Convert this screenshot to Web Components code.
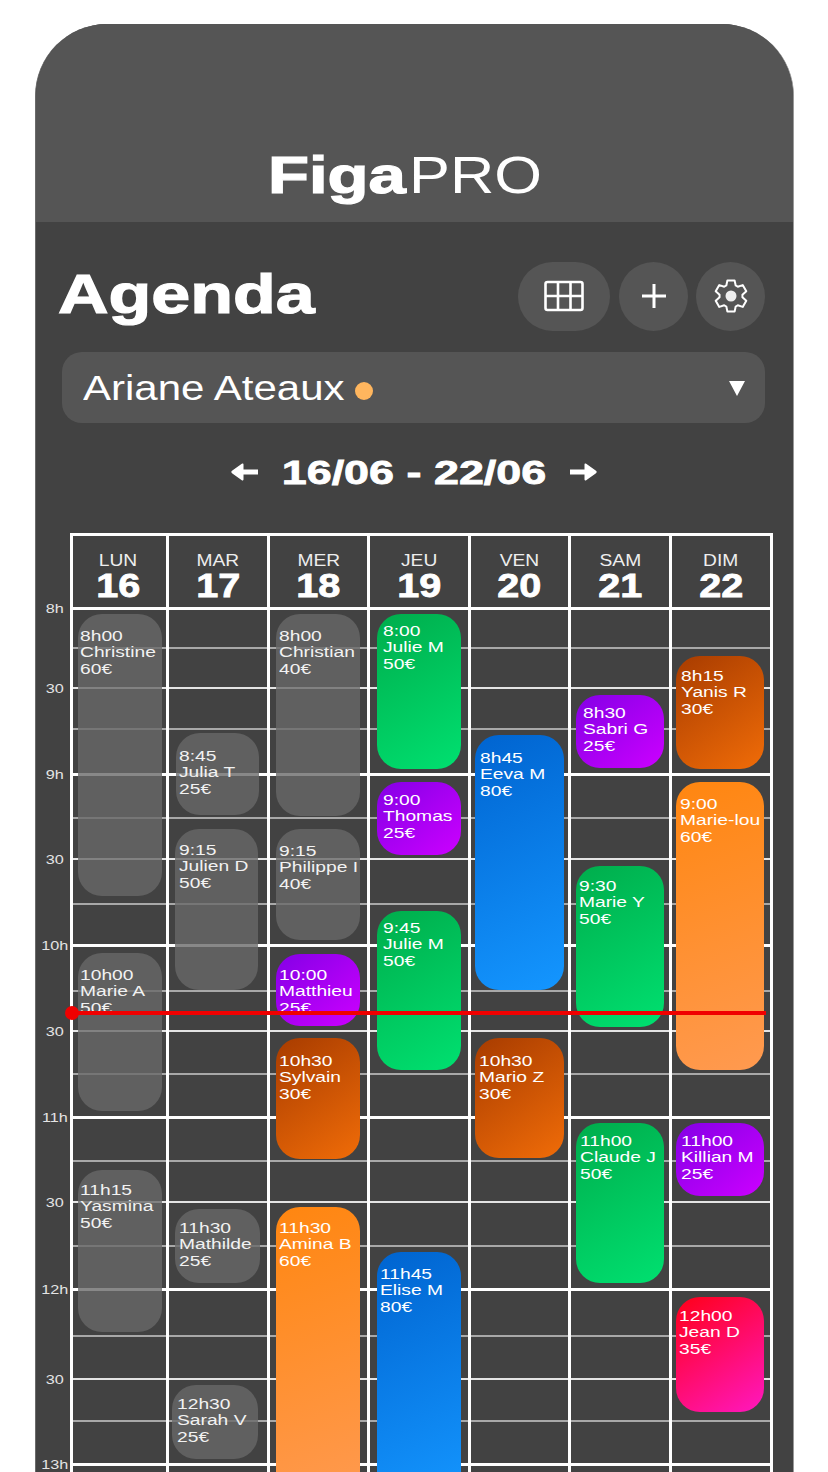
<!DOCTYPE html>
<html lang="fr">
<head>
<meta charset="utf-8">
<title>FigaPRO Agenda</title>
<style>
  html, body { margin: 0; background: #fff; height: 1472px; overflow: hidden; }
  body { font-family: "Liberation Sans", Arial, sans-serif; color: #fff; }
</style>
</head>
<body>
<figa-app>
  <figa-header></figa-header>
  <agenda-bar>
    <icon-button wide><svg width="40" height="32" viewBox="0 0 40 32" fill="none" stroke="#fff" stroke-width="2.6"><rect x="1.5" y="2" width="37" height="28" rx="2"/><path d="M14 2v28M26.500 2v28M1.500 16h37"/></svg></icon-button>
    <icon-button><svg width="26" height="26" viewBox="0 0 26 26" fill="none" stroke="#fff" stroke-width="3"><path d="M13 1v24M1 13h24"/></svg></icon-button>
    <icon-button><gear-icon></gear-icon></icon-button>
  </agenda-bar>
  <person-select>Ariane Ateaux</person-select>
  <week-nav>16/06 - 22/06</week-nav>
  <week-calendar></week-calendar>
</figa-app>

<script>
/* APP SHELL */
class FigaApp extends HTMLElement {
  constructor() {
    super();
    this.attachShadow({mode: 'open'}).innerHTML = `
      <style>
        :host { display: block; box-sizing: border-box; width: 759px; height: 1448px; margin: 24px 0 0 35px;
          background: #424242; border-radius: 72px 72px 0 0; overflow: hidden;
          border-right: 1px solid #999; border-left: 1px solid #6a6a6a; }
      </style>
      <slot></slot>`;
  }
}
customElements.define('figa-app', FigaApp);

class FigaHeader extends HTMLElement {
  constructor() {
    super();
    this.attachShadow({mode: 'open'}).innerHTML = `
      <style>
        :host { display: flex; justify-content: center; align-items: flex-end; box-sizing: border-box; height: 198px; padding: 0 0 17px 0; background: #555; }
        .logo { display: flex; font-size: 52px; line-height: 60px; margin-right: 22px; }
        b { display: block; width: 141px; font-weight: 700; -webkit-text-stroke: 1.2px #fff; transform: scaleX(1.29); transform-origin: 0 50%; }
        span { display: block; width: 130px; font-weight: 400; transform: scaleX(1.18); transform-origin: 0 50%; }
      </style>
      <div class="logo"><b>Figa</b><span>PRO</span></div>`;
  }
}
customElements.define('figa-header', FigaHeader);

/* TITLE + ACTIONS */
class AgendaBar extends HTMLElement {
  constructor() {
    super();
    this.attachShadow({mode: 'open'}).innerHTML = `
      <style>
        :host { display: flex; align-items: center; height: 70px; padding: 39px 28px 0 24px; }
        h1 { flex: 1; margin: -4px 0 0 -2px; font-size: 56px; line-height: 70px; font-weight: 700; -webkit-text-stroke: 1.2px #fff; transform: scaleX(1.25); transform-origin: 0 50%; }
        .actions { display: flex; gap: 8px; }
      </style>
      <h1>Agenda</h1>
      <div class="actions"><slot></slot></div>`;
  }
}
customElements.define('agenda-bar', AgendaBar);

class IconButton extends HTMLElement {
  constructor() {
    super();
    this.attachShadow({mode: 'open'}).innerHTML = `
      <style>
        :host { display: flex; align-items: center; justify-content: center; width: 69px; height: 69px; border-radius: 35px; background: #555; }
        :host([wide]) { width: 92px; margin-right: 1px; }
      </style>
      <slot></slot>`;
  }
}
customElements.define('icon-button', IconButton);

// six teeth, outline only, filled hub
class GearIcon extends HTMLElement {
  constructor() {
    super();
    const pts = [];
    for (let k = 0; k < 6; k++) {
      const a = -90 + 60 * k;
      [[a - 24, 11.5], [a - 13, 16], [a + 13, 16], [a + 24, 11.5]].forEach(([deg, r]) => {
        const rad = deg * Math.PI / 180;
        pts.push((18 + r * Math.cos(rad)).toFixed(2) + ',' + (18 + r * Math.sin(rad)).toFixed(2));
      });
    }
    this.attachShadow({mode: 'open'}).innerHTML = `
      <style>:host { display: block; width: 36px; height: 36px; } svg { display: block; }</style>
      <svg width="36" height="36" viewBox="0 0 36 36">
        <polygon points="${pts.join(' ')}" fill="none" stroke="#fff" stroke-width="2" stroke-linejoin="round"/>
        <circle cx="18" cy="18" r="5.500" fill="#eee"/>
      </svg>`;
  }
}
customElements.define('gear-icon', GearIcon);

/* PERSON DROPDOWN */
class PersonSelect extends HTMLElement {
  constructor() {
    super();
    this.attachShadow({mode: 'open'}).innerHTML = `
      <style>
        :host { display: flex; align-items: center; box-sizing: border-box; height: 71px; margin: 21px 28px 0 26px; padding: 0 20px 0 21px; background: #555; border-radius: 20px; }
        .name { width: 262px; font-size: 35px; transform: scaleX(1.2); transform-origin: 0 50%; white-space: nowrap; }
        .dot { width: 18px; height: 18px; margin: 6px 0 0 10px; border-radius: 50%; background: #ffb65e; }
        .arrow { margin-left: auto; margin-top: 2px; width: 0; height: 0; border-left: 8px solid transparent; border-right: 8px solid transparent; border-top: 15px solid #fff; }
      </style>
      <span class="name"><slot></slot></span><i class="dot"></i><i class="arrow"></i>`;
  }
}
customElements.define('person-select', PersonSelect);

/* WEEK NAV */
class WeekNav extends HTMLElement {
  constructor() {
    super();
    this.attachShadow({mode: 'open'}).innerHTML = `
      <style>
        :host { display: flex; align-items: center; justify-content: center; gap: 23px; height: 40px; margin-top: 29px; padding-right: 2px; }
        .date { width: 266px; text-align: center; font-size: 34px; font-weight: 700; white-space: nowrap; -webkit-text-stroke: .8px #fff; transform: scaleX(1.32); }
      </style>
      <svg width="27" height="20" viewBox="0 0 27 20" fill="#fff"><path d="M27 7.500v5H12.500v5a1 1 0 0 1-1.700.7L1 11.200a1.600 1.600 0 0 1 0-2.400L10.800 1.800a1 1 0 0 1 1.700.7v5z"/></svg>
      <span class="date"><slot></slot></span>
      <svg width="27" height="20" viewBox="0 0 27 20" fill="#fff"><path d="M0 7.500v5h14.500v5a1 1 0 0 0 1.700.7L26 11.200a1.600 1.600 0 0 0 0-2.400L16.200 1.800a1 1 0 0 0-1.700.7v5z"/></svg>`;
  }
}
customElements.define('week-nav', WeekNav);

/* ONE APPOINTMENT */
class CalEvent extends HTMLElement {
  constructor() {
    super();
    this.attachShadow({mode: 'open'}).innerHTML = `
      <style>
        :host { position: absolute; box-sizing: border-box; overflow: hidden; border-radius: 24px; font-size: 15.500px; line-height: 16.300px; color: #fff; }
        :host([tone=gray]) { background: rgba(104,104,104,.79); color: #f2f2f2; }
        :host([tone=green]) { background: linear-gradient(150deg, #00ad4c, #00e070); }
        :host([tone=purple]) { background: linear-gradient(140deg, #8400e6, #cc00ff); }
        :host([tone=rust]) { background: linear-gradient(145deg, #a83c00, #f06c08); }
        :host([tone=orange]) { background: linear-gradient(160deg, #ff8610, #ff9a50); }
        :host([tone=blue]) { background: linear-gradient(155deg, #0064d0, #1496ff); }
        :host([tone=red]) { background: linear-gradient(145deg, #ff0018, #ff18c0); }
        div { white-space: nowrap; transform: scaleX(1.24); transform-origin: 0 0; }
      </style>
      <div><slot></slot></div>`;
  }
}
customElements.define('cal-event', CalEvent);

/* WEEK GRID */
const DAYS = [
  ['LUN', 16, 96], ['MAR', 17, 101], ['MER', 18, 100], ['JEU', 19, 101],
  ['VEN', 20, 100], ['SAM', 21, 101], ['DIM', 22, 101]
];
// page y of each line, weight 3 = hour, 2 = half hour, 1 = quarter
const LINES = [
  [609,3],[649,1],[689,2],[730,1],[775,3],[819,1],[860,2],[905,1],[946,3],[992,1],[1032,2],[1075,1],
  [1118,3],[1162,1],[1203,2],[1247,1],[1290,3],[1337,1],[1380,2],[1422,1],[1465,3],[1520,1]
];
const LABELS = {609:'8h',689:'30',775:'9h',860:'30',946:'10h',1032:'30',1118:'11h',1203:'30',1290:'12h',1380:'30',1465:'13h'};
const BODY_TOP = 607;
// day, left, right, top, bottom, text x, text y, tone, lines
const EVENTS = [
  [0,78,162,614,896,80,636,'gray','8h00','Christine','60€'],
  [0,78,162,953,1111,80,975,'gray','10h00','Marie A','50€'],
  [0,78,162,1170,1332,80,1190,'gray','11h15','Yasmina','50€'],
  [1,176,259,733,815,179,756,'gray','8:45','Julia T','25€'],
  [1,175,258,829,990,179,850,'gray','9:15','Julien D','50€'],
  [1,175,260,1209,1283,179,1228,'gray','11h30','Mathilde','25€'],
  [1,172,258,1385,1459,177,1404,'gray','12h30','Sarah V','25€'],
  [2,276,360,614,816,279,636,'gray','8h00','Christian','40€'],
  [2,276,360,829,940,279,851,'gray','9:15','Philippe I','40€'],
  [2,276,360,954,1026,279,975,'purple','10:00','Matthieu','25€'],
  [2,276,360,1038,1159,279,1061,'rust','10h30','Sylvain','30€'],
  [2,276,360,1207,1500,279,1228,'orange','11h30','Amina B','60€'],
  [3,377,461,614,769,383,631,'green','8:00','Julie M','50€'],
  [3,377,461,782,855,383,800,'purple','9:00','Thomas','25€'],
  [3,377,461,911,1070,383,928,'green','9:45','Julie M','50€'],
  [3,377,461,1252,1500,380,1274,'blue','11h45','Elise M','80€'],
  [4,475,564,735,990,480,758,'blue','8h45','Eeva M','80€'],
  [4,475,564,1038,1158,479,1061,'rust','10h30','Mario Z','30€'],
  [5,576,664,695,768,583,713,'purple','8h30','Sabri G','25€'],
  [5,576,664,866,1027,579,886,'green','9:30','Marie Y','50€'],
  [5,576,664,1123,1283,580,1141,'green','11h00','Claude J','50€'],
  [6,676,764,656,769,681,676,'rust','8h15','Yanis R','30€'],
  [6,676,764,782,1070,680,804,'orange','9:00','Marie-lou','60€'],
  [6,676,764,1123,1196,681,1141,'purple','11h00','Killian M','25€'],
  [6,676,764,1297,1412,679,1316,'red','12h00','Jean D','35€']
];

class WeekCalendar extends HTMLElement {
  constructor() {
    super();
    let rulerRows = '', lineRows = '';
    for (let i = 0; i < LINES.length - 1; i++) {
      const [y, w] = LINES[i];
      const h = LINES[i + 1][0] - y;
      rulerRows += `<div class="tick" style="height:${h}px"><span>${LABELS[y] || ''}</span></div>`;
      lineRows += `<div class="row w${w}" style="height:${h}px"></div>`;
    }
    let left = 73, heads = '', cols = '';
    DAYS.forEach((d, i) => {
      let evs = '';
      EVENTS.filter(e => e[0] === i).forEach(e => {
        const style = `left:${e[1] - left}px;width:${e[2] - e[1]}px;top:${e[3] - BODY_TOP}px;height:${e[4] - e[3]}px;padding:${e[6] - e[3] - 8}px 0 0 ${e[5] - e[1]}px`;
        evs += `<cal-event tone="${e[7]}" style="${style}">${e[8]}<br>${e[9]}<br>${e[10]}</cal-event>`;
      });
      heads += `<div class="head"><small>${d[0]}</small><strong>${d[1]}</strong></div>`;
      cols += `<div class="col" style="grid-column:${i + 1}">${evs}</div>`;
      left += d[2];
    });
    this.attachShadow({mode: 'open'}).innerHTML = `
      <style>
        :host { display: flex; position: relative; margin-top: 41px; }
        .ruler { width: 34px; padding-top: 72px; flex: none; }
        .tick { position: relative; text-align: center; font-size: 13.500px; color: #e4e4e4; }
        .tick span { display: block; line-height: 0; padding: 4px 0 0 3px; transform: scaleX(1.2); }
        .grid { display: grid; grid-template-columns: ${DAYS.map(d => d[2] + 'px').join(' ')}; grid-template-rows: 71px auto;
          border-top: 3px solid #fff; border-left: 3px solid #fff; }
        .head { display: flex; flex-direction: column; align-items: center; padding-top: 17px; box-sizing: border-box; border-right: 3px solid #fff; }
        .head:first-child { padding-right: 3px; }
        small { font-size: 16px; line-height: 16px; transform: scaleX(1.2); color: #eee; }
        strong { font-size: 33px; line-height: 26px; margin-top: 4px; -webkit-text-stroke: .8px #fff; transform: scaleX(1.2); }
        .lines { grid-row: 2; grid-column: 1 / -1; }
        .row { box-sizing: border-box; }
        .w3 { border-top: 3px solid #fff; }
        .w2 { border-top: 2px solid #e4e4e4; }
        .w1 { border-top: 2px solid #a8a8a8; }
        .col { grid-row: 2; position: relative; border-right: 3px solid #fff; }
        .now { position: absolute; left: 36px; right: 27px; top: 478px; height: 4px; background: #f00000; z-index: 2; }
        .now::before { content: ""; position: absolute; left: -7px; top: -5px; width: 14px; height: 14px; border-radius: 50%; background: #f00000; }
      </style>
      <div class="ruler">${rulerRows}</div>
      <div class="grid">${heads}<div class="lines">${lineRows}</div>${cols}</div>
      <div class="now"></div>`;
  }
}
customElements.define('week-calendar', WeekCalendar);
</script>
</body>
</html>
